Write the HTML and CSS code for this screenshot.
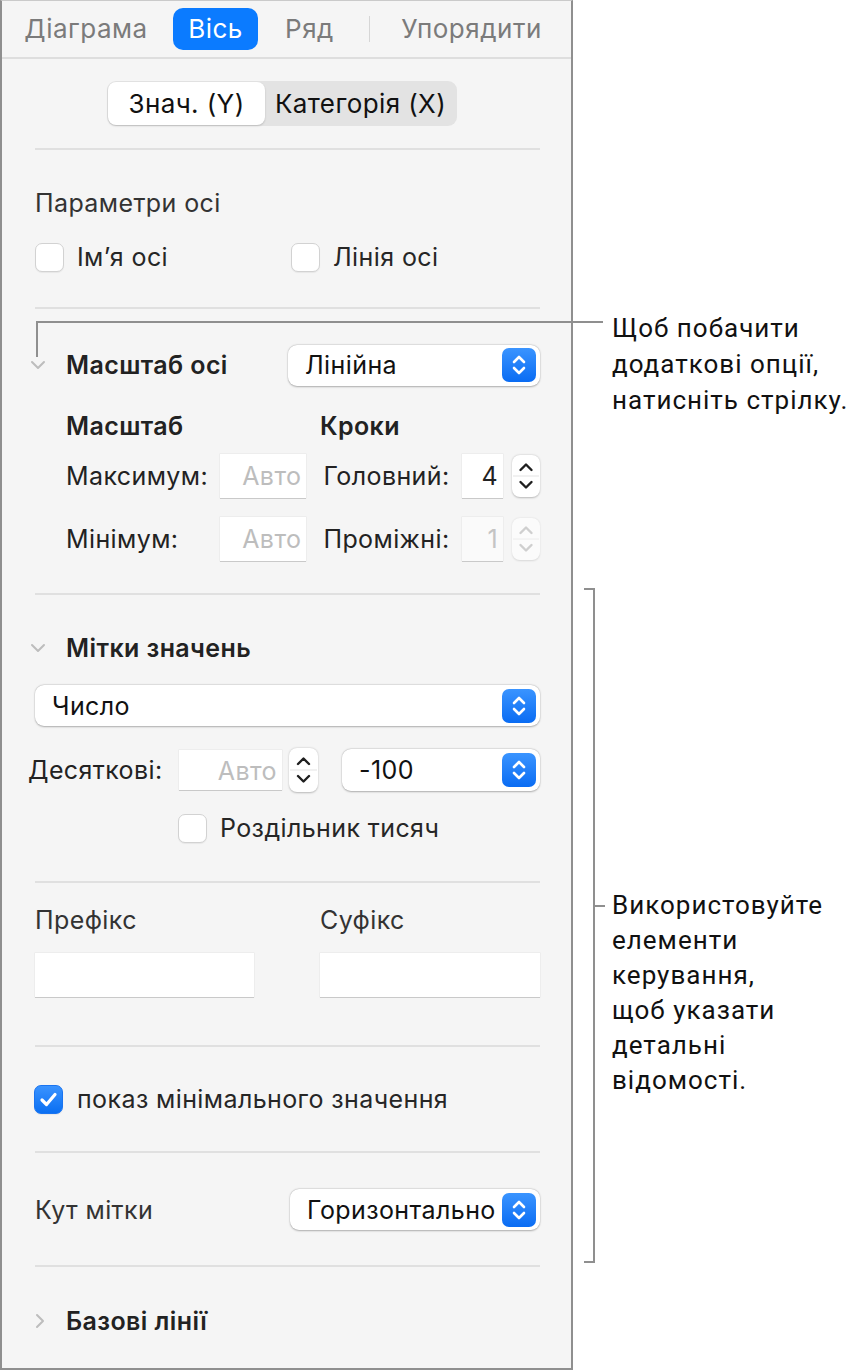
FILE: index.html
```html
<!DOCTYPE html>
<html lang="uk">
<head>
    <meta charset="UTF-8">
    <meta name="viewport" content="width=device-width, initial-scale=1.0">
    <title>Вісь — інспектор діаграми</title>
    <link rel="stylesheet" href="styles.css">
</head>
<body>
    <div class="page">
        <div class="panel">
            <nav class="tabs">
                <span class="tab tab-chart">Діаграма</span>
                <span class="tab tab-axis active">Вісь</span>
                <span class="tab tab-series">Ряд</span>
                <span class="tab-divider"></span>
                <span class="tab tab-arrange">Упорядити</span>
            </nav>

            <div class="segment-wrap">
                <div class="segment">
                    <span class="seg seg-on">Знач. (Y)</span>
                    <span class="seg">Категорія (X)</span>
                </div>
            </div>

            <div class="sep"></div>

            <section class="group g-options">
                <div class="title">Параметри осі</div>
                <div class="row checks">
                    <label class="check check-first"><span class="box"></span>Ім’я осі</label>
                    <label class="check"><span class="box"></span>Лінія осі</label>
                </div>
            </section>

            <div class="sep"></div>

            <section class="group g-scale">
                <div class="row disclose">
                    <svg class="chev" width="16" height="10" viewBox="0 0 16 10"><path d="M2 2 L8 8 L14 2" fill="none" stroke="#bdbdbd" stroke-width="2" stroke-linecap="round" stroke-linejoin="round"/></svg>
                    <span class="strong">Масштаб осі</span>
                    <div class="popup popup-scale">
                        <span>Лінійна</span>
                        <span class="popbtn"><svg width="34" height="34" viewBox="0 0 34 34"><path d="M12 14 L17 9 L22 14 M12 20 L17 25 L22 20" fill="none" stroke="#fff" stroke-width="2.6" stroke-linecap="round" stroke-linejoin="round"/></svg></span>
                    </div>
                </div>
                <div class="row heads">
                    <span class="strong head-scale">Масштаб</span>
                    <span class="strong">Кроки</span>
                </div>
                <div class="row fields fields-max">
                    <span class="lbl lbl-a">Максимум:</span>
                    <span class="field field-a placeholder">Авто</span>
                    <span class="lbl lbl-b">Головний:</span>
                    <span class="field field-b">4</span>
                    <span class="stepper"><svg width="28" height="42" viewBox="0 0 28 42"><path d="M8.5 15 L14 9.5 L19.5 15 M8.5 27 L14 32.5 L19.5 27" fill="none" stroke="#1f1f1f" stroke-width="2.4" stroke-linecap="round" stroke-linejoin="round"/><path d="M1 21 H27" stroke="#e3e3e3" stroke-width="1"/></svg></span>
                </div>
                <div class="row fields fields-min">
                    <span class="lbl lbl-a">Мінімум:</span>
                    <span class="field field-a placeholder">Авто</span>
                    <span class="lbl lbl-b">Проміжні:</span>
                    <span class="field field-b disabled">1</span>
                    <span class="stepper disabled"><svg width="28" height="42" viewBox="0 0 28 42"><path d="M8.5 15 L14 9.5 L19.5 15 M8.5 27 L14 32.5 L19.5 27" fill="none" stroke="#cfcfcf" stroke-width="2.4" stroke-linecap="round" stroke-linejoin="round"/><path d="M1 21 H27" stroke="#ececec" stroke-width="1"/></svg></span>
                </div>
            </section>

            <div class="sep"></div>

            <section class="group g-labels">
                <div class="row disclose title-row">
                    <svg class="chev" width="16" height="10" viewBox="0 0 16 10"><path d="M2 2 L8 8 L14 2" fill="none" stroke="#bdbdbd" stroke-width="2" stroke-linecap="round" stroke-linejoin="round"/></svg>
                    <span class="strong">Мітки значень</span>
                </div>
                <div class="popup popup-wide">
                    <span>Число</span>
                    <span class="popbtn"><svg width="34" height="34" viewBox="0 0 34 34"><path d="M12 14 L17 9 L22 14 M12 20 L17 25 L22 20" fill="none" stroke="#fff" stroke-width="2.6" stroke-linecap="round" stroke-linejoin="round"/></svg></span>
                </div>
                <div class="row decimals">
                    <span class="lbl lbl-dec">Десяткові:</span>
                    <span class="field field-dec placeholder">Авто</span>
                    <span class="stepper stepper-dec"><svg width="29" height="44" viewBox="0 0 29 44"><path d="M9 16 L14.5 10.5 L20 16 M9 28 L14.5 33.5 L20 28" fill="none" stroke="#1f1f1f" stroke-width="2.4" stroke-linecap="round" stroke-linejoin="round"/><path d="M1 22 H28" stroke="#e3e3e3" stroke-width="1"/></svg></span>
                    <div class="popup popup-num">
                        <span>-100</span>
                        <span class="popbtn"><svg width="34" height="34" viewBox="0 0 34 34"><path d="M12 14 L17 9 L22 14 M12 20 L17 25 L22 20" fill="none" stroke="#fff" stroke-width="2.6" stroke-linecap="round" stroke-linejoin="round"/></svg></span>
                    </div>
                </div>
                <div class="row checks checks-sep">
                    <label class="check"><span class="box"></span>Роздільник тисяч</label>
                </div>
            </section>

            <div class="sep"></div>

            <section class="group g-affix">
                <div class="row affix-labels">
                    <span class="title affix-first">Префікс</span>
                    <span class="title">Суфікс</span>
                </div>
                <div class="row affix-fields">
                    <span class="field field-prefix"></span>
                    <span class="field field-suffix"></span>
                </div>
            </section>

            <div class="sep"></div>

            <section class="group g-min">
                <div class="row checks">
                    <label class="check"><span class="box on"><svg width="29" height="29" viewBox="0 0 29 29"><path d="M8 15 L12.5 19.5 L21 9.5" fill="none" stroke="#fff" stroke-width="3.2" stroke-linecap="round" stroke-linejoin="round"/></svg></span>показ мінімального значення</label>
                </div>
            </section>

            <div class="sep"></div>

            <section class="group g-angle">
                <div class="row angle">
                    <span class="title">Кут мітки</span>
                    <div class="popup popup-angle">
                        <span>Горизонтально</span>
                        <span class="popbtn"><svg width="34" height="34" viewBox="0 0 34 34"><path d="M12 14 L17 9 L22 14 M12 20 L17 25 L22 20" fill="none" stroke="#fff" stroke-width="2.6" stroke-linecap="round" stroke-linejoin="round"/></svg></span>
                    </div>
                </div>
            </section>

            <div class="sep"></div>

            <section class="group g-base">
                <div class="row disclose title-row">
                    <svg class="chev chev-right" width="10" height="16" viewBox="0 0 10 16"><path d="M2 2 L8 8 L2 14" fill="none" stroke="#bdbdbd" stroke-width="2" stroke-linecap="round" stroke-linejoin="round"/></svg>
                    <span class="strong">Базові лінії</span>
                </div>
            </section>
        </div>

        <div class="notes">
            <p class="note note-arrow">Щоб побачити<br>додаткові опції,<br>натисніть стрілку.</p>
            <div class="bracket-note">
                <div class="bracket"></div>
                <p class="note note-bracket">Використовуйте<br>елементи<br>керування,<br>щоб указати<br>детальні<br>відомості.</p>
            </div>
        </div>

        <div class="leader"></div>
    </div>
</body>
</html>
```

FILE: styles.css
```css
* {
    box-sizing: border-box;
}

body {
    margin: 0;
    background: #fff;
    font-family: Inter, "Noto Sans", sans-serif;
    color: #222;
}

.page {
    display: flex;
    position: relative;
    width: 867px;
    height: 1370px;
}

.panel {
    width: 573px;
    height: 1370px;
    flex-shrink: 0;
    background: #f5f5f5;
    border: 2px solid #8f8f8f;
    border-top: 1px solid #cacaca;
    letter-spacing: 0.4px;
}

/* tabs */
.tabs {
    display: flex;
    align-items: center;
    height: 58px;
    padding-left: 14px;
    border-bottom: 2px solid #dedede;
}

.tab {
    height: 42px;
    line-height: 42px;
    text-align: center;
    font-size: 26px;
    letter-spacing: 0.5px;
    color: #7b7b7b;
    border-radius: 10px;
}

.tab-chart { width: 140px; }
.tab-axis { width: 85px; margin-left: 17px; }
.tab-series { width: 75px; margin-left: 14px; }
.tab-arrange { width: 143px; margin-left: 30px; }

.tab.active {
    background: #0b7bff;
    color: #fff;
}

.tab-divider {
    width: 1px;
    height: 26px;
    margin-left: 22px;
    background: #d6d6d6;
}

/* segmented control */
.segment-wrap {
    padding: 22px 0 22px 105px;
}

.segment {
    display: flex;
    width: 350px;
    height: 45px;
    padding: 1px;
    background: #e3e3e3;
    border-radius: 9px;
}

.seg {
    flex: 1;
    text-align: center;
    line-height: 43px;
    font-size: 26px;
    color: #111;
}

.seg-on {
    flex: 0 0 157px;
    background: #fff;
    border-radius: 8px;
    box-shadow: 0 1px 2px rgba(0, 0, 0, 0.18);
}

.sep {
    height: 2px;
    margin: 0 31px 0 33px;
    background: #e0e0e0;
}

/* groups */
.group {
    padding: 0 31px 0 33px;
}

.row {
    display: flex;
    align-items: center;
}

.title {
    font-size: 25px;
    color: #333;
}

.strong {
    font-size: 25px;
    font-weight: 600;
    color: #222;
}

.lbl {
    font-size: 25px;
    color: #222;
}

.g-options {
    padding-top: 35px;
    padding-bottom: 35px;
}

.g-options .title {
    height: 36px;
    line-height: 36px;
}

.checks {
    height: 30px;
    margin-top: 21px;
}

.check {
    display: flex;
    align-items: center;
    font-size: 25px;
    color: #262626;
}

.check-first {
    width: 256px;
}

.box {
    width: 29px;
    height: 29px;
    margin-right: 13px;
    background: #fff;
    border: 1px solid #d2d2d2;
    border-radius: 7px;
    box-shadow: 0 1px 1px rgba(0, 0, 0, 0.06);
}

.box.on {
    background: linear-gradient(#3a93ff, #0a6ff2);
    border-color: #1a74f0;
}

.box.on svg {
    display: block;
    margin: -1px;
}

/* disclosure rows */
.disclose .chev {
    margin-left: -5px;
    margin-right: 20px;
}

.disclose .chev-right {
    margin-left: 0;
    margin-right: 21px;
}

.g-scale {
    padding-top: 35px;
    padding-bottom: 32px;
}

.g-scale .disclose {
    height: 42px;
}

.popup {
    display: flex;
    align-items: center;
    justify-content: space-between;
    height: 41px;
    padding-left: 17px;
    padding-right: 4px;
    background: #fff;
    border-radius: 9px;
    box-shadow: 0 0.5px 2px rgba(0, 0, 0, 0.28), 0 0 0 0.5px rgba(0, 0, 0, 0.06);
    font-size: 25px;
    color: #111;
}

.popbtn {
    width: 34px;
    height: 34px;
    flex-shrink: 0;
    border-radius: 7px;
    background: linear-gradient(#3a94ff, #0a6cf3);
}

.popbtn svg {
    display: block;
}

.popup-scale {
    width: 252px;
    margin-left: auto;
}

.heads {
    height: 30px;
    margin-top: 25px;
    padding-left: 31px;
}

.head-scale {
    width: 254px;
}

.fields {
    height: 44px;
    padding-left: 31px;
}

.fields-max { margin-top: 13px; }
.fields-min { margin-top: 19px; }

.lbl-a { width: 154px; }
.lbl-b { width: 139px; margin-left: 17px; }

.field {
    height: 44px;
    line-height: 44px;
    padding-right: 5px;
    text-align: right;
    font-size: 25px;
    color: #222;
    background: #fff;
    box-shadow: 0 1px 0 #c9c9c9, 0 0 0 0.5px #e6e6e6;
}

.field.placeholder {
    color: #bdbdbd;
}

.field.disabled {
    background: #fafafa;
    color: #c4c4c4;
}

.field-a { width: 87px; }
.field-b { width: 41px; }

.stepper {
    width: 28px;
    height: 42px;
    margin-left: 9px;
    background: #fff;
    border-radius: 8px;
    box-shadow: 0 0.5px 2px rgba(0, 0, 0, 0.25);
}

.stepper.disabled {
    background: #fbfbfb;
    box-shadow: 0 0.5px 2px rgba(0, 0, 0, 0.12);
}

.stepper svg {
    display: block;
}

/* value labels */
.g-labels {
    padding-top: 38px;
    padding-bottom: 38px;
}

.title-row {
    height: 30px;
}

.popup-wide {
    margin-top: 22px;
}

.decimals {
    height: 44px;
    margin-top: 22px;
}

.lbl-dec {
    width: 151px;
    margin-left: -7px;
}

.field-dec {
    width: 103px;
    height: 40px;
    line-height: 42px;
}

.stepper-dec {
    width: 29px;
    height: 44px;
    margin-left: 7px;
}

.popup-num {
    width: 198px;
    height: 42px;
    margin-left: 24px;
}

.checks-sep {
    padding-left: 143px;
}

/* prefix / suffix */
.g-affix {
    padding-top: 22px;
    padding-bottom: 48px;
}

.affix-labels {
    height: 30px;
}

.affix-first {
    width: 285px;
}

.affix-fields {
    margin-top: 18px;
}

.field-prefix { width: 219px; }
.field-suffix { width: 220px; margin-left: 66px; }

.g-min {
    padding-top: 16px;
    padding-bottom: 37px;
}

.g-min .box {
    margin-left: -1px;
    margin-right: 14px;
}

.g-angle {
    padding-top: 36px;
    padding-bottom: 35px;
}

.angle {
    height: 41px;
}

.popup-angle {
    width: 250px;
    margin-left: auto;
}

.g-base {
    padding-top: 39px;
}

/* annotations */
.notes {
    flex: 1;
}

.note {
    margin: 0;
    font-family: Roboto, "Liberation Sans", sans-serif;
    font-size: 26px;
    letter-spacing: 1px;
    color: #111;
}

.note-arrow {
    margin-top: 310px;
    padding-left: 39px;
    line-height: 36px;
}

.bracket-note {
    display: flex;
    align-items: flex-start;
    margin-top: 170px;
    margin-left: 11px;
}

.bracket {
    width: 11px;
    height: 675px;
    flex-shrink: 0;
    border: 2px solid #8f8f8f;
    border-left: none;
}

.note-bracket {
    position: relative;
    margin-top: 300px;
    margin-left: 17px;
    line-height: 35px;
}

.note-bracket::before {
    content: "";
    position: absolute;
    left: -17px;
    top: 17px;
    width: 10px;
    height: 2px;
    background: #8f8f8f;
}

.leader {
    position: absolute;
    left: 36px;
    top: 321px;
    width: 567px;
    height: 36px;
    border-top: 2px solid #8f8f8f;
    border-left: 2px solid #8f8f8f;
}
```
